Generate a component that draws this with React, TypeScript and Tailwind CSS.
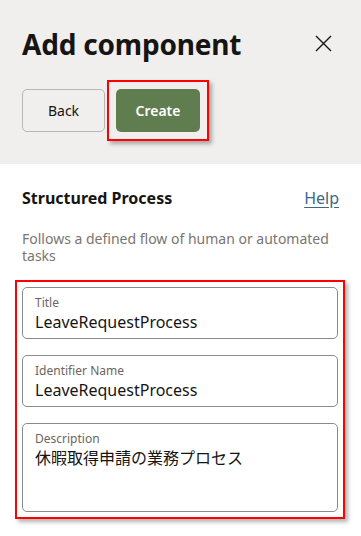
import React from "react";

const font = { fontFamily: '"Noto Sans", "Open Sans", "Noto Sans CJK JP", sans-serif' };

function Field({ label, value, tall }: { label: string; value: string; tall?: boolean }) {
  return (
    <div
      className={`rounded-[5px] border border-[#8a8a8a] bg-white px-[12px] pt-[7px] ${tall ? "h-[89px]" : "h-[52px]"}`}
    >
      <div className="text-[12px] leading-[16px] text-[#6b6560]">{label}</div>
      <div className="text-[16px] leading-[22px] text-[#161513]">{value}</div>
    </div>
  );
}

export default function App() {
  return (
    <div className="w-[361px] h-[536px] bg-white overflow-hidden" style={font}>
      <div className="h-[164px] bg-[#f1efed] px-[22px] pt-[26px]">
        <div className="flex items-start justify-between">
          <h1 className="text-[28px] leading-[36px] font-bold text-[#161513] tracking-[-0.2px]">Add component</h1>
          <svg width="17" height="17" viewBox="0 0 17 17" className="mt-[9px] mr-[7px]">
            <path d="M1 1 L16 16 M16 1 L1 16" stroke="#161513" strokeWidth="1.4" />
          </svg>
        </div>
        <div className="mt-[18px] flex items-center">
          <button className="h-[43px] w-[83px] rounded-[5px] border border-[#b8b5b2] bg-transparent text-[14px] text-[#161513]">
            Back
          </button>
          <div className="ml-[2px] border-2 border-[#ff0000] p-[7px] shadow-[3px_3px_4px_rgba(0,0,0,0.3)]">
            <button className="h-[43px] w-[84px] rounded-[5px] bg-[#5f7d4f] text-[14px] font-semibold text-white">
              Create
            </button>
          </div>
        </div>
      </div>
      <div className="px-[22px] pt-[22px]">
        <div className="flex items-center justify-between">
          <div className="text-[16px] leading-[24px] font-bold text-[#161513]">Structured Process</div>
          <a className="text-[16px] leading-[24px] text-[#3e6687] underline underline-offset-[3px]">Help</a>
        </div>
        <div className="mt-[20px] text-[14px] leading-[17px] text-[#7a7570]">
          Follows a defined flow of human or automated tasks
        </div>
      </div>
      <div className="mx-[15px] mt-[16px] w-[330px] border-2 border-[#ff0000] px-[5px] py-[5px] shadow-[3px_3px_4px_rgba(0,0,0,0.3)] flex flex-col gap-[16px]">
        <Field label="Title" value="LeaveRequestProcess" />
        <Field label="Identifier Name" value="LeaveRequestProcess" />
        <Field label="Description" value="休暇取得申請の業務プロセス" tall />
      </div>
    </div>
  );
}
